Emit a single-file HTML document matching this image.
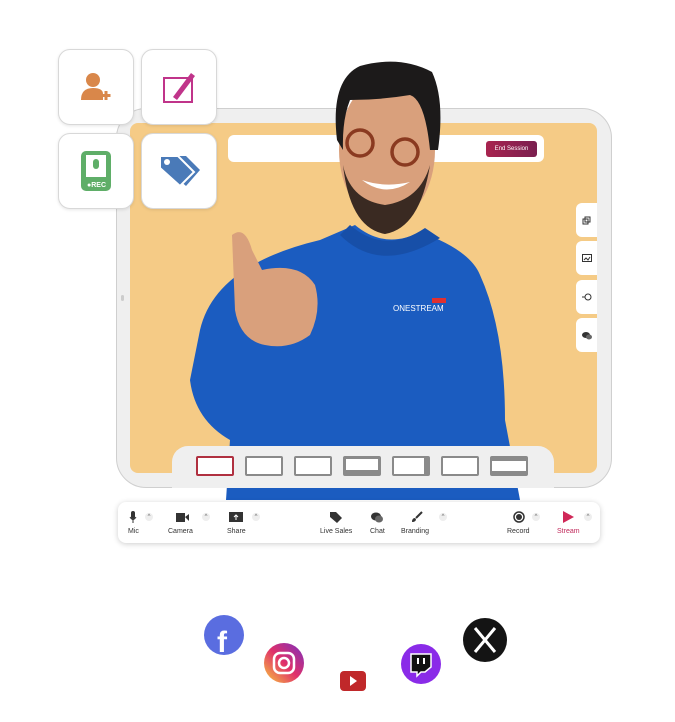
<!DOCTYPE html>
<html><head><meta charset="utf-8"><style>
body{margin:0;width:675px;height:722px;background:#fff;position:relative;overflow:hidden;font-family:"Liberation Sans",sans-serif}
.a{position:absolute}
.tile{position:absolute;width:74px;height:74px;background:#fff;border:1px solid #d8d8d8;border-radius:12px;box-shadow:0 1px 3px rgba(0,0,0,.1);display:flex;align-items:center;justify-content:center}
.side{position:absolute;left:576px;width:21px;height:34px;background:#fff;border-radius:6px 0 0 6px;display:flex;align-items:center;justify-content:center}
.th{position:absolute;top:456px;width:38px;height:20px;background:#fff;border:2px solid #8a8a8a;border-radius:2px;box-sizing:border-box}
.ic{position:absolute;top:510px;width:14px;height:14px;display:flex;align-items:center;justify-content:center;color:#222;font-size:11px}
.lb{position:absolute;top:528px;font-size:7px;color:#333;white-space:nowrap}
.car{position:absolute;top:513px;width:8px;height:8px;border-radius:50%;background:#eee;font-size:6px;color:#666;text-align:center;line-height:9px}
</style></head><body>
<div class="a" style="left:116px;top:108px;width:496px;height:380px;background:#efefef;border:1px solid #cfcfcf;border-radius:30px;box-sizing:border-box"></div>
<div class="a" style="left:121px;top:295px;width:3px;height:6px;background:#ccc;border-radius:2px"></div>
<div class="a" style="left:130px;top:123px;width:467px;height:350px;background:#f5cb86;border-radius:8px"></div>
<div class="a" style="left:228px;top:135px;width:316px;height:27px;background:#fff;border-radius:6px"></div>
<div class="a" style="left:486px;top:141px;width:51px;height:16px;background:linear-gradient(90deg,#a8244f,#7a1f4f);border-radius:3px;color:#fff;font-size:6px;line-height:16px;text-align:center">End Session</div>
<div class="side" style="top:203px"><svg width="9" height="9"><rect x="1" y="3" width="5" height="5" fill="none" stroke="#333"/><rect x="3" y="1" width="5" height="5" fill="none" stroke="#333"/></svg></div>
<div class="side" style="top:241px"><svg width="10" height="8"><rect x=".5" y=".5" width="9" height="7" fill="none" stroke="#333"/><path d="M2 6l2-2 2 2 2-3" stroke="#333" fill="none"/></svg></div>
<div class="side" style="top:280px"><svg width="10" height="10"><circle cx="6" cy="5" r="3" fill="none" stroke="#333"/><path d="M0 5h3" stroke="#333"/></svg></div>
<div class="side" style="top:318px"><svg width="10" height="9"><ellipse cx="4" cy="4" rx="4" ry="3" fill="#333"/><ellipse cx="7" cy="6" rx="3" ry="2.5" fill="#666"/></svg></div>
<svg class="a" style="left:0;top:0" width="675" height="722">
<path d="M200 330 Q215 265 320 240 L355 225 Q385 250 420 232 Q470 250 480 275 Q505 330 505 420 L520 500 L226 500 L230 440 Q195 420 190 380Z" fill="#1b5cc0"/>
<path d="M340 235 Q380 275 440 238 L425 228 Q385 255 350 225Z" fill="#174fa8"/>
<path d="M232 235 Q245 225 252 250 L262 270 Q300 262 315 285 Q322 310 310 335 Q290 350 265 345 Q240 340 235 310Z" fill="#d9a07c"/>
<ellipse cx="387" cy="150" rx="48" ry="72" fill="#d9a07c"/>
<path d="M337 140 Q330 80 360 66 Q400 55 432 72 Q445 100 438 150 L430 150 Q425 100 410 95 Q380 100 350 100 Q342 120 343 150Z" fill="#1c1a1a"/>
<path d="M343 165 Q350 228 385 234 Q420 228 430 165 Q420 200 385 205 Q350 200 343 165Z" fill="#3a2a22"/>
<circle cx="360" cy="143" r="13" fill="none" stroke="#8a3a20" stroke-width="3.5"/>
<circle cx="405" cy="152" r="13" fill="none" stroke="#8a3a20" stroke-width="3.5"/>
<path d="M362 180 Q385 198 410 182 Q385 188 362 180Z" fill="#fff"/>
<text x="393" y="311" font-size="8" fill="#fff" font-family="Liberation Sans">ONESTREAM</text>
<rect x="432" y="298" width="14" height="5" fill="#e03030"/>
</svg>
<div class="a" style="left:172px;top:446px;width:382px;height:42px;background:#efefef;border-radius:16px 16px 0 0"></div>
<div class="th" style="left:196px;border-color:#b03040"></div>
<div class="th" style="left:245px"></div><div class="th" style="left:294px"></div>
<div class="th" style="left:343px;border-width:3px 3px 6px 3px"></div>
<div class="th" style="left:392px;border-right-width:6px"></div>
<div class="th" style="left:441px"></div><div class="th" style="left:490px;border-top-width:5px;border-bottom-width:5px"></div>
<div class="a" style="left:118px;top:502px;width:482px;height:41px;background:#fff;border-radius:8px;box-shadow:0 1px 6px rgba(0,0,0,.2)"></div>
<div class="ic" style="left:126px"><svg width="8" height="12"><rect x="2" y="0" width="4" height="8" rx="2" fill="#333"/><path d="M1 6q3 5 6 0M4 9v3" stroke="#333" fill="none"/></svg></div><div class="lb" style="left:128px">Mic</div><div class="car" style="left:145px">^</div>
<div class="ic" style="left:175px"><svg width="13" height="9"><rect width="9" height="9" fill="#333"/><path d="M9 4l4-3v7z" fill="#333"/></svg></div><div class="lb" style="left:168px">Camera</div><div class="car" style="left:202px">^</div>
<div class="ic" style="left:229px"><svg width="14" height="10"><rect width="14" height="10" fill="#333"/><path d="M7 8V3M5 5l2-2 2 2" stroke="#fff" fill="none"/></svg></div><div class="lb" style="left:227px">Share</div><div class="car" style="left:252px">^</div>
<div class="ic" style="left:329px"><svg width="12" height="11"><path d="M0 0h6l6 6-5 5-7-6z" fill="#333"/></svg></div><div class="lb" style="left:320px">Live Sales</div>
<div class="ic" style="left:370px"><svg width="12" height="11"><ellipse cx="5" cy="4.5" rx="5" ry="4" fill="#333"/><ellipse cx="8" cy="7" rx="4" ry="3.5" fill="#666"/></svg></div><div class="lb" style="left:370px">Chat</div>
<div class="ic" style="left:410px"><svg width="12" height="12"><path d="M11 1L5 7" stroke="#333" stroke-width="2"/><path d="M1 11q0-4 3-4l1 1q0 3-4 3z" fill="#333"/></svg></div><div class="lb" style="left:401px">Branding</div><div class="car" style="left:439px">^</div>
<div class="ic" style="left:512px"><svg width="12" height="12"><circle cx="6" cy="6" r="5" fill="none" stroke="#333" stroke-width="1.5"/><circle cx="6" cy="6" r="3" fill="#333"/></svg></div><div class="lb" style="left:507px">Record</div><div class="car" style="left:532px">^</div>
<div class="ic" style="left:561px"><svg width="12" height="12"><path d="M1 0l11 6-11 6z" fill="#d02858"/></svg></div><div class="lb" style="left:557px;color:#c0285a">Stream</div><div class="car" style="left:584px">^</div>
<div class="tile" style="left:58px;top:49px"><svg width="34" height="30"><circle cx="14" cy="8" r="7" fill="#d9874a"/><path d="M2 28 Q2 16 14 16 Q24 16 24 22 L24 28Z" fill="#d9874a"/><path d="M27 19v9M22.5 23.5h9" stroke="#d9874a" stroke-width="3"/></svg></div>
<div class="tile" style="left:141px;top:49px"><svg width="36" height="36"><rect x="3" y="9" width="28" height="24" fill="none" stroke="#c0348a" stroke-width="2"/><path d="M12 28l18-24 4 3-18 24z" fill="#c0348a"/></svg></div>
<div class="tile" style="left:58px;top:133px"><svg width="30" height="40"><rect width="30" height="40" rx="5" fill="#5fae68"/><rect x="5" y="4" width="20" height="22" fill="#fff"/><rect x="12" y="8" width="6" height="10" rx="3" fill="#5fae68"/><text x="6" y="36" font-size="7" fill="#fff" font-weight="bold" font-family="Liberation Sans">●REC</text></svg></div>
<div class="tile" style="left:141px;top:133px"><svg width="46" height="34"><path d="M14 2 L30 2 L44 16 L30 32 L14 18Z" fill="#4a7ab8"/><path d="M4 2 L22 2 L38 18 L24 32 L4 14Z" fill="#4a7ab8" stroke="#fff" stroke-width="2"/><circle cx="11" cy="8" r="3" fill="#fff"/></svg></div>
<svg class="a" style="left:0;top:0" width="675" height="722">
<circle cx="224" cy="635" r="20" fill="#5a6de0"/><text x="217" y="652" font-size="30" font-weight="bold" fill="#fff" font-family="Liberation Sans">f</text>
<defs><linearGradient id="ig" x1="0" y1="1" x2="1" y2="0"><stop offset="0" stop-color="#f9c83c"/><stop offset=".5" stop-color="#e0306a"/><stop offset="1" stop-color="#7a30c0"/></linearGradient></defs>
<circle cx="284" cy="663" r="20" fill="url(#ig)"/><rect x="274" y="653" width="20" height="20" rx="6" fill="none" stroke="#fff" stroke-width="2.5"/><circle cx="284" cy="663" r="5" fill="none" stroke="#fff" stroke-width="2.5"/>
<rect x="340" y="671" width="26" height="20" rx="4" fill="#c0282a"/><path d="M350 676l7 5-7 5z" fill="#fff"/>
<circle cx="421" cy="664" r="20" fill="#8a2be8"/><path d="M411 654h20v13l-6 5h-4l-4 4v-4h-6z" fill="#111" stroke="#fff" stroke-width="1.5"/><path d="M418 658v6M424 658v6" stroke="#fff" stroke-width="2"/>
<circle cx="485" cy="640" r="22" fill="#141414"/><path d="M475 628l20 24M495 628l-20 24" stroke="#fff" stroke-width="3"/>
</svg>
</body></html>
